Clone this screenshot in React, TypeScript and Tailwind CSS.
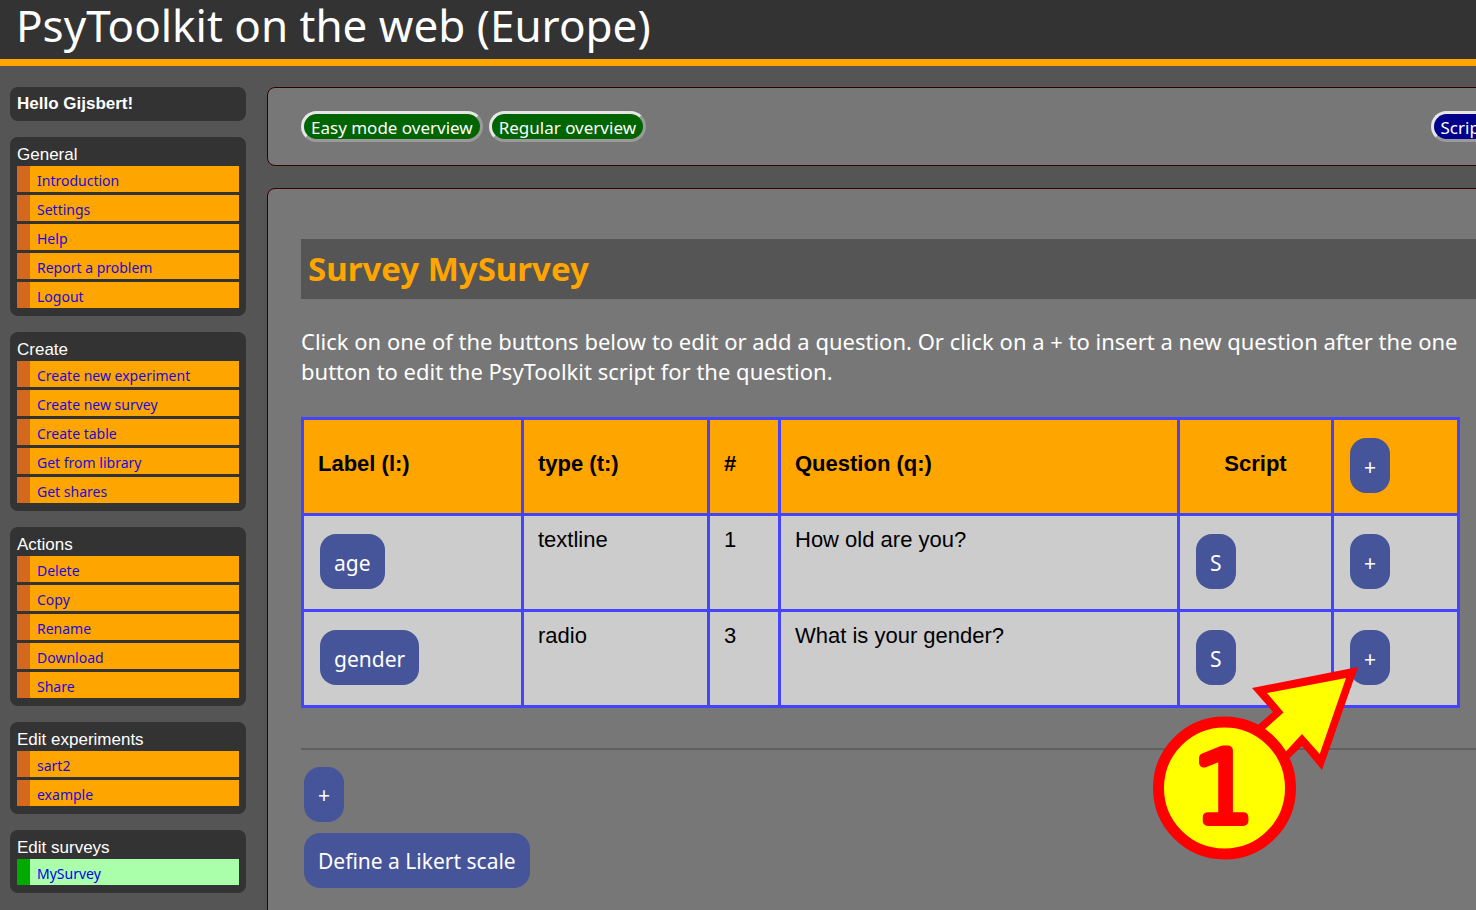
import type { ReactNode } from "react";

const sections = [
  { title: "General", items: ["Introduction", "Settings", "Help", "Report a problem", "Logout"] },
  {
    title: "Create",
    items: ["Create new experiment", "Create new survey", "Create table", "Get from library", "Get shares"],
  },
  { title: "Actions", items: ["Delete", "Copy", "Rename", "Download", "Share"] },
  { title: "Edit experiments", items: ["sart2", "example"] },
  { title: "Edit surveys", items: ["MySurvey"], active: true },
];

const questions = [
  { label: "age", type: "textline", count: 1, text: "How old are you?" },
  { label: "gender", type: "radio", count: 3, text: "What is your gender?" },
];

function ActionButton({ children }: { children: ReactNode }) {
  return (
    <button
      type="button"
      className="h-[55px] rounded-2xl bg-[#465599] px-[14px] pt-[2px] font-['Noto_Sans',sans-serif] text-[21px] font-normal whitespace-nowrap text-white"
    >
      {children}
    </button>
  );
}

function PillButton({ className, children }: { className: string; children: ReactNode }) {
  return (
    <button
      type="button"
      className={`h-[31px] rounded-full border-3 border-t-[#e6e6e6] border-r-[#9a9a9a] border-b-[#9a9a9a] border-l-[#e6e6e6] px-[7px] pt-[2px] text-[17px] leading-[23px] whitespace-nowrap text-white ${className}`}
    >
      {children}
    </button>
  );
}

function Sidebar() {
  return (
    <nav className="flex w-[236px] shrink-0 flex-col gap-4 font-['Liberation_Sans',sans-serif] text-[17px] text-white">
      <div className="flex h-[34px] items-center rounded-lg bg-[#333] px-[7px] font-bold">Hello Gijsbert!</div>
      {sections.map((section) => (
        <section key={section.title} className="rounded-lg bg-[#333] px-[7px] pt-[5px] pb-2">
          <h2 className="h-6 leading-[26px]">{section.title}</h2>
          <ul className="flex flex-col gap-[3px]">
            {section.items.map((item) => (
              <li key={item}>
                <a
                  href="#"
                  className={`flex h-[26px] items-center border-l-[13px] pt-[3px] pl-[7px] font-['Noto_Sans',sans-serif] text-[14px] leading-5 ${
                    section.active
                      ? "border-[#00aa00] bg-[#aaffaa] text-[#0000ee]"
                      : "border-[#d2691e] bg-[#ffa500] text-[#1a0dda]"
                  }`}
                >
                  {item}
                </a>
              </li>
            ))}
          </ul>
        </section>
      ))}
    </nav>
  );
}

// numbered arrow pointing at the last insert button
function Callout() {
  return (
    <svg
      className="pointer-events-none absolute right-[102px] -bottom-[153px]"
      width="207"
      height="194"
      viewBox="0 0 207 194"
      role="img"
      aria-label="Step 1"
    >
      <polygon points="207,0 101,21 122,45 72,88 108,121 151,79 171,103" fill="#ff0000" />
      <polygon points="195,11 116,26 132.5,45.5 80,92 104,118 151,67 168.7,87" fill="#ffff00" />
      <circle cx="73.5" cy="121" r="66" fill="#ffff00" stroke="#ff0000" strokeWidth="11" />
      <text
        x="73"
        y="154"
        textAnchor="middle"
        fontFamily="DejaVu Sans Light, DejaVu Sans, sans-serif"
        fontWeight="200"
        fontSize="96"
        fill="#ff0000"
        stroke="#ff0000"
        strokeWidth="10"
        strokeLinejoin="round"
      >
        1
      </text>
    </svg>
  );
}

function QuestionTable() {
  return (
    <div className="relative mr-9">
      <table className="w-full table-fixed border-collapse text-left font-['Liberation_Sans',sans-serif] text-[22px] leading-7 text-black [&_td]:border-3 [&_td]:border-[#4444ff] [&_td]:px-[14px] [&_td]:align-top [&_th]:border-3 [&_th]:border-[#4444ff] [&_th]:px-[14px]">
        <colgroup>
          <col className="w-[220px]" />
          <col className="w-[186px]" />
          <col className="w-[71px]" />
          <col />
          <col className="w-[154px]" />
          <col className="w-[126px]" />
        </colgroup>
        <thead>
          <tr className="h-[96px] bg-[#ffa500]">
            <th className="pb-[6px]">Label (l:)</th>
            <th className="pb-[6px]">type (t:)</th>
            <th className="pb-[6px]">#</th>
            <th className="pb-[6px]">Question (q:)</th>
            <th className="pb-[6px] text-center">Script</th>
            <th className="pb-[2px]">
              <div className="pl-[2px]">
                <ActionButton>+</ActionButton>
              </div>
            </th>
          </tr>
        </thead>
        <tbody>
          {questions.map((q) => (
            <tr key={q.label} className="h-[96px] bg-[#ccc]">
              <td className="pt-[18px]">
                <div className="pl-[2px]">
                  <ActionButton>{q.label}</ActionButton>
                </div>
              </td>
              <td className="pt-[10px]">{q.type}</td>
              <td className="pt-[10px]">{q.count}</td>
              <td className="pt-[10px]">{q.text}</td>
              <td className="pt-[18px]">
                <div className="pl-[2px]">
                  <ActionButton>S</ActionButton>
                </div>
              </td>
              <td className="pt-[18px]">
                <div className="pl-[2px]">
                  <ActionButton>+</ActionButton>
                </div>
              </td>
            </tr>
          ))}
        </tbody>
      </table>
      <Callout />
    </div>
  );
}

export default function App() {
  return (
    <div className="min-h-screen overflow-hidden bg-[#555] font-['Noto_Sans',sans-serif] text-white">
      <header className="h-[66px] border-b-7 border-[#ffa500] bg-[#333] px-4">
        <h1 className="text-[44px] leading-[50px] whitespace-nowrap">PsyToolkit on the web (Europe)</h1>
      </header>
      <div className="flex gap-[21px] pt-[21px] pl-[10px]">
        <Sidebar />
        {/* the main column is wider than the window and runs off its right edge */}
        <main className="-mr-[54px] flex min-w-0 flex-1 flex-col gap-[22px]">
          <div className="flex h-[79px] items-center justify-between rounded-lg border border-[#330000] bg-[#777] px-[33px]">
            <div className="flex gap-[6px]">
              <PillButton className="bg-[#006400]">Easy mode overview</PillButton>
              <PillButton className="bg-[#006400]">Regular overview</PillButton>
            </div>
            <PillButton className="bg-[#00008b]">Script</PillButton>
          </div>
          <div className="rounded-lg border border-[#330000] bg-[#777] px-[33px] pt-[50px] pb-10">
            <h2 className="h-[60px] bg-[#555] px-[7px] text-[33px] leading-[60px] font-bold text-[#ffa500]">
              Survey MySurvey
            </h2>
            <p className="mt-[27px] mb-[31px] text-[22px] leading-[30px]">
              Click on one of the buttons below to edit or add a question. Or click on a + to insert a new question
              after the one button to edit the PsyToolkit script for the question.
            </p>
            <QuestionTable />
            <hr className="mt-10 mb-[17px] border-t-2 border-[#606060]" />
            <div className="flex flex-col items-start gap-[11px] pl-[3px]">
              <ActionButton>+</ActionButton>
              <ActionButton>Define a Likert scale</ActionButton>
            </div>
          </div>
        </main>
      </div>
    </div>
  );
}
